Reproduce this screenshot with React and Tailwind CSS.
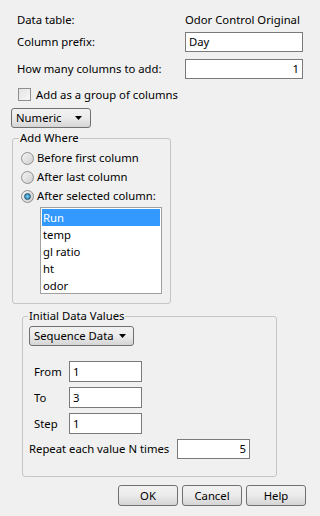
import React from "react";

const font = { fontFamily: '"Noto Sans", "Open Sans", sans-serif' };

const Caret = () => (
  <svg width="7" height="4" viewBox="0 0 7 4" className="shrink-0">
    <path d="M0 0h7L3.5 4z" fill="#000" />
  </svg>
);

const Radio = ({ checked }) => (
  <span className="relative w-[13px] h-[13px] rounded-full border border-[#8e8f8f] bg-linear-to-br from-[#f4f4f4] to-[#d0d0d0] shrink-0 flex items-center justify-center">
    {checked && (
      <span className="w-[7px] h-[7px] rounded-full bg-radial from-[#7fd4f5] to-[#1a6d9e] border border-[#1f5a7d]" />
    )}
  </span>
);

const Btn = ({ children, className }) => (
  <div
    className={
      "flex items-center border border-[#707070] rounded-[3px] bg-linear-to-b from-[#f2f2f2] via-[#ebebeb] to-[#d4d4d4] whitespace-nowrap shrink-0 " +
      className
    }
  >
    {children}
  </div>
);

const Field = ({ value, className, right }) => (
  <div
    className={
      "bg-white border border-[#7a7a7a] flex items-center px-[3px] shrink-0 " +
      (right ? "justify-end " : "") +
      className
    }
  >
    {value}
  </div>
);

export default function App() {
  const cols = ["Run", "temp", "gl ratio", "ht", "odor"];
  return (
    <div
      className="w-[320px] h-[516px] bg-[#f0f0f0] text-[11.3px] leading-[16px] text-black flex flex-col overflow-hidden whitespace-nowrap *:shrink-0"
      style={font}
    >
      <div className="mt-[11px] h-[18px] flex items-center">
        <span className="ml-[17px] w-[168px]">Data table:</span>
        <span>Odor Control Original</span>
      </div>
      <div className="mt-[3px] h-[20px] flex items-center">
        <span className="ml-[17px] w-[168px]">Column prefix:</span>
        <Field value="Day" className="w-[118px] h-[20px]" />
      </div>
      <div className="mt-[7px] h-[20px] flex items-center">
        <span className="ml-[17px] w-[168px]">How many columns to add:</span>
        <Field value="1" right className="w-[118px] h-[20px]" />
      </div>
      <div className="mt-[8px] h-[15px] flex items-center">
        <span className="ml-[18px] w-[13px] h-[13px] border border-[#8f8f8f] bg-linear-to-br from-[#e3e3e3] to-[#f8f8f8]" />
        <span className="ml-[5px]">Add as a group of columns</span>
      </div>
      <Btn className="mt-[6px] ml-[11px] w-[80px] h-[20px] justify-between pl-[4px] pr-[8px]">
        <span>Numeric</span>
        <Caret />
      </Btn>

      <fieldset className="mt-[2px] ml-[12px] w-[159px] border border-[#c5c5c5] rounded-[3px] pb-[9px]">
        <legend className="ml-[6px] px-[1px] leading-[16px]">Add Where</legend>
        <div className="mt-[4px] ml-[8px] flex flex-col gap-[3px]">
          <label className="h-[16px] flex items-center gap-[3px]">
            <Radio />
            <span>Before first column</span>
          </label>
          <label className="h-[16px] flex items-center gap-[3px]">
            <Radio />
            <span>After last column</span>
          </label>
          <label className="h-[16px] flex items-center gap-[3px]">
            <Radio checked />
            <span>After selected column:</span>
          </label>
        </div>
        <div className="mt-[3px] ml-[27px] w-[122px] h-[87px] bg-white border border-[#a0a0a0] p-px flex flex-col">
          {cols.map((c, i) => (
            <div
              key={c}
              className={
                "h-[17px] shrink-0 flex items-center pl-[1px] " +
                (i === 0 ? "bg-[#3399ff] text-white" : "")
              }
            >
              {c}
            </div>
          ))}
        </div>
      </fieldset>

      <fieldset className="mt-[4px] ml-[22px] w-[255px] border border-[#c5c5c5] rounded-[3px] pb-[17px]">
        <legend className="ml-[5px] px-[1px] leading-[16px]">Initial Data Values</legend>
        <Btn className="mt-[2px] ml-[6px] w-[105px] h-[20px] justify-between pl-[4px] pr-[7px]">
          <span>Sequence Data</span>
          <Caret />
        </Btn>
        <div className="mt-[15px] flex flex-col gap-[5px]">
          {[
            ["From", "1"],
            ["To", "3"],
            ["Step", "1"],
          ].map(([l, v]) => (
            <div key={l} className="flex items-center">
              <span className="ml-[11px] w-[35px]">{l}</span>
              <Field value={v} className="w-[73px] h-[21px]" />
            </div>
          ))}
          <div className="flex items-center">
            <span className="ml-[6px] w-[148px]">Repeat each value N times</span>
            <Field value="5" right className="w-[73px] h-[20px]" />
          </div>
        </div>
      </fieldset>

      <div className="mt-[8px] flex justify-end gap-[4px] pr-[14px]">
        <Btn className="w-[60px] h-[21px] justify-center">OK</Btn>
        <Btn className="w-[60px] h-[21px] justify-center">Cancel</Btn>
        <Btn className="w-[60px] h-[21px] justify-center">Help</Btn>
      </div>
    </div>
  );
}
